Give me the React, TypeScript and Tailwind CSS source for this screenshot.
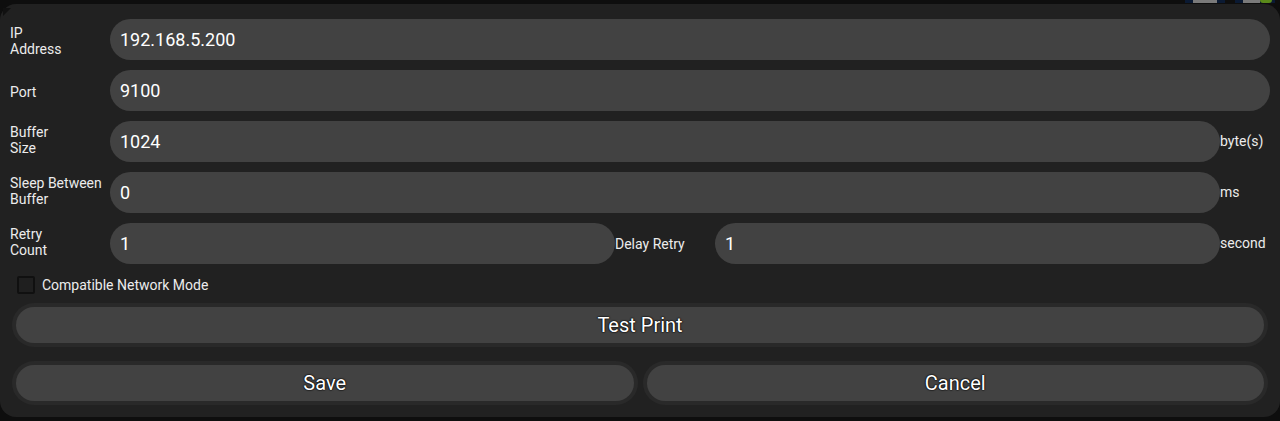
import React from 'react';

function Label({ children, className = 'pb-[3px]' }: { children: React.ReactNode; className?: string }) {
  return (
    <div className={`flex w-[100px] shrink-0 items-center text-[14px] leading-[16px] text-[#ececec] ${className}`}>
      {children}
    </div>
  );
}

function Field({ value, className = '' }: { value: string; className?: string }) {
  return (
    <div className={`flex h-[41px] items-center rounded-full bg-[#424242] pl-[10px] text-[18px] text-white ${className}`}>
      {value}
    </div>
  );
}

function Unit({ children }: { children: React.ReactNode }) {
  return <div className="flex w-[50px] shrink-0 items-center text-[14px] text-[#ececec]">{children}</div>;
}

function PillButton({ children }: { children: React.ReactNode }) {
  return (
    <div className="rounded-full bg-[#292929] p-[4px]">
      <div className="flex h-[36px] items-center justify-center rounded-full bg-[#424242] text-[20px] text-white [text-shadow:0_0_2px_#000,0_0_1px_#000,0_0_1px_#000]">
        {children}
      </div>
    </div>
  );
}

export default function App() {
  return (
    <div className="h-[421px] w-[1280px] bg-[#0e0e0e] font-['Roboto',sans-serif]">
      <div className="flex h-[4px] justify-end gap-[10px] pr-[5px]">
        <div className="h-[3px] w-[40px] bg-[#0b1a33] px-[8px]">
          <div className="h-full bg-[#7a7a7a]" />
        </div>
        <div className="flex h-[3px] w-[40px] bg-[#0b1a33] pl-[8px]">
          <div className="h-full w-[17px] bg-[#7a7a7a]" />
          <div className="h-full w-[12px] rounded-b-full bg-[#5a8a1a]" />
        </div>
      </div>
      <div className="relative flex h-[413px] flex-col rounded-[16px] bg-[#212121] px-[10px] pt-[15px] pb-[12px]">
        <svg className="absolute left-[3px] top-[4px]" width="8" height="8" viewBox="0 0 8 8">
          <path d="M0 0H8L0 8Z" fill="#111" />
        </svg>
        <div className="flex flex-col gap-[10px]">
          <div className="flex">
            <Label className="pt-[2px]">
              IP
              <br />
              Address
            </Label>
            <Field value="192.168.5.200" className="flex-1" />
          </div>
          <div className="flex">
            <Label className="pt-[3px]">Port</Label>
            <Field value="9100" className="flex-1" />
          </div>
          <div className="flex">
            <Label>
              Buffer
              <br />
              Size
            </Label>
            <Field value="1024" className="flex-1" />
            <Unit>byte(s)</Unit>
          </div>
          <div className="flex">
            <Label>
              Sleep Between
              <br />
              Buffer
            </Label>
            <Field value="0" className="flex-1" />
            <Unit>ms</Unit>
          </div>
          <div className="flex">
            <Label>
              Retry
              <br />
              Count
            </Label>
            <Field value="1" className="flex-1" />
            <Label className="">Delay Retry</Label>
            <Field value="1" className="flex-1" />
            <Unit>second</Unit>
          </div>
        </div>
        <div className="mt-[12px] flex h-[18px] items-center gap-[7px] pl-[7px]">
          <div className="h-[18px] w-[18px] rounded-[2px] border-2 border-[#101010] bg-[#1f1f1f]" />
          <span className="text-[14px] leading-[18px] text-[#ececec]">Compatible Network Mode</span>
        </div>
        <div className="mt-[9px] px-[2px]">
          <PillButton>Test Print</PillButton>
        </div>
        <div className="mt-[14px] grid grid-cols-2 gap-[5px] px-[2px]">
          <PillButton>Save</PillButton>
          <PillButton>Cancel</PillButton>
        </div>
      </div>
    </div>
  );
}
